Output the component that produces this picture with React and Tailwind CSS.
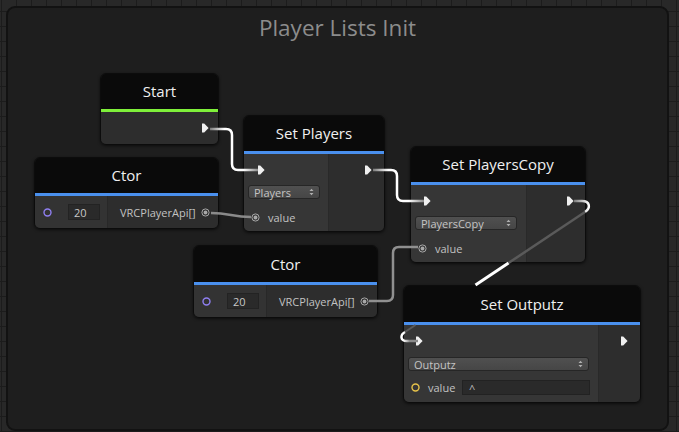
import React from 'react';

const font = "font-['Open_Sans',_'Liberation_Sans',_sans-serif]";

// flow port arrow (exec pin)
const Arrow = () => (
  <svg width="7" height="10" viewBox="0 0 7 10" className="block">
    <path d="M0 0.5 H2.2 L6.6 5 L2.2 9.5 H0 Z" fill="#f0f0f0" />
  </svg>
);

// connected data pin
const PinDot = () => (
  <svg width="9" height="9" viewBox="0 0 9 9" className="block shrink-0">
    <circle cx="4.5" cy="4.5" r="3.6" fill="none" stroke="#a8a8a8" strokeWidth="1" />
    <circle cx="4.5" cy="4.5" r="1.9" fill="#a8a8a8" />
  </svg>
);

const PinRing = ({ color }) => (
  <svg width="9" height="9" viewBox="0 0 9 9" className="block shrink-0">
    <circle cx="4.5" cy="4.5" r="3.5" fill="none" stroke={color} strokeWidth="1.4" />
  </svg>
);

const Dropdown = ({ label, className }) => (
  <div className={`flex items-center justify-between h-[14px] rounded-[3px] border border-[#262626] bg-[linear-gradient(#505050,#464646)] pl-[5px] pr-[5px] text-[11px] leading-none text-[#c4c4c4] ${className}`}>
    <span>{label}</span>
    <svg width="5" height="8" viewBox="0 0 5 8" className="block">
      <path d="M0.5 3 L2.5 0.8 L4.5 3 Z M0.5 5 L2.5 7.2 L4.5 5 Z" fill="#b0b0b0" />
    </svg>
  </div>
);

function Node({ pos, title, bar, head, children }) {
  return (
    <div className={`absolute ${pos} flex flex-col rounded-[6px] border border-[#0c0c0c] overflow-hidden shadow-[0_1px_3px_rgba(0,0,0,0.6)]`}>
      <div className={`${head} flex items-center justify-center bg-[#0a0a0a] text-[15px] text-[#f0f0f0]`}>{title}</div>
      <div className={`h-[3px] ${bar}`} />
      {children}
    </div>
  );
}

function CtorNode({ pos, head }) {
  return (
    <Node pos={pos} title="Ctor" bar="bg-[#4a90ee]" head={head}>
      <div className="flex h-[32px] text-[11px] text-[#c2c2c2]">
        <div className="w-[73px] flex items-center pl-[8px] bg-[#333333] border-r border-[#282828]">
          <PinRing color="#8f7ff0" />
          <div className="ml-[16px] w-[32px] h-[16px] bg-[#2a2a2a] border border-[#232323] flex items-center pl-[5px] leading-none text-[#c8c8c8]">20</div>
        </div>
        <div className="flex-1 flex items-center pl-[12px] pr-[8px] bg-[#2d2d2d]">
          <span className="leading-none">VRCPlayerApi[]</span>
          <div className="ml-auto"><PinDot /></div>
        </div>
      </div>
    </Node>
  );
}

function SetNode({ pos, title, leftW, arrowPl, dropdown, dropW, rightPr, head, dropMt, valueMt, valueExtra, ring }) {
  return (
    <Node pos={pos} title={title} bar="bg-[#4a90ee]" head={head}>
      <div className="flex h-[77px] text-[11px] text-[#c2c2c2]">
        <div className={`${leftW} flex flex-col pt-[6px] bg-[#363636] border-r border-[#292929]`}>
          <div className={`h-[20px] flex items-center ${arrowPl}`}><Arrow /></div>
          <div className={`${dropMt} pl-[4px]`}>
            <Dropdown label={dropdown} className={dropW} />
          </div>
          <div className={`${valueMt} h-[16px] flex items-center pl-[7px] pr-[8px]`}>
            {ring ? <PinRing color="#e6c24a" /> : <PinDot />}
            <span className="ml-[8px] leading-none">value</span>
            {valueExtra}
          </div>
        </div>
        <div className={`flex-1 flex flex-col pt-[6px] bg-[#2d2d2d] ${rightPr}`}>
          <div className="h-[20px] flex items-center justify-end"><Arrow /></div>
        </div>
      </div>
    </Node>
  );
}

export default function App() {
  return (
    <div className={`relative w-[679px] h-[432px] overflow-hidden bg-[#282828] bg-[linear-gradient(to_right,#1c1c1c_1px,transparent_1px),linear-gradient(to_bottom,#1c1c1c_1px,transparent_1px)] bg-size-[15px_15px] bg-position-[1px_11px] pl-[6px] pt-[6px] ${font}`}>
      {/* group frame */}
      <div className="w-[663px] h-[425px] rounded-[9px] border-2 border-[#121212] bg-[#1e1e1e] pt-[5px]">
        <div className="text-center text-[22.5px] leading-[30px] text-[#8c8c8c]">Player Lists Init</div>
      </div>

      <Node pos="left-[100px] top-[73px] w-[119px]" title="Start" bar="bg-[#7ff03a]" head="h-[35px]">
        <div className="h-[32px] flex items-center justify-end pr-[9px] bg-[#2d2d2d]">
          <Arrow />
        </div>
      </Node>

      <CtorNode pos="left-[34px] top-[157px] w-[185px]" head="h-[35px]" />

      <SetNode
        pos="left-[243px] top-[115px] w-[142px]"
        title="Set Players"
        head="h-[35px]"
        leftW="w-[85px]"
        arrowPl="pl-[14px]"
        dropdown="Players"
        dropW="w-[72px]"
        dropMt="mt-[5px]"
        valueMt="mt-[10px]"
        rightPr="pr-[12px]"
      />

      <SetNode
        pos="left-[410px] top-[146px] w-[176px]"
        title="Set PlayersCopy"
        head="h-[35px]"
        leftW="w-[116px]"
        arrowPl="pl-[13px]"
        dropdown="PlayersCopy"
        dropW="w-[102px]"
        dropMt="mt-[5px]"
        valueMt="mt-[10px]"
        rightPr="pr-[11px]"
      />

      <CtorNode pos="left-[193px] top-[245px] w-[185px]" head="h-[36px]" />

      <SetNode
        pos="left-[403px] top-[285px] w-[238px]"
        title="Set Outputz"
        head="h-[36px]"
        leftW="w-[195px]"
        arrowPl="pl-[12px]"
        dropdown="Outputz"
        dropW="w-[181px]"
        dropMt="mt-[6px]"
        valueMt="mt-[8px]"
        rightPr="pr-[12px]"
        ring
        valueExtra={
          <div className="ml-auto w-[128px] h-[15px] bg-[#2a2a2a] border border-[#222222] pl-[6px] text-[11px] leading-[15px] text-[#bdbdbd]">^</div>
        }
      />

      {/* wires */}
      <svg className="absolute left-0 top-0 pointer-events-none" width="679" height="432" viewBox="0 0 679 432" fill="none">
        <defs>
          <linearGradient id="w1" gradientUnits="userSpaceOnUse" x1="210" y1="0" x2="258" y2="0">
            <stop offset="0" stopColor="#7a7a7a" />
            <stop offset="0.3" stopColor="#ffffff" />
            <stop offset="0.7" stopColor="#ffffff" />
            <stop offset="1" stopColor="#8a8a8a" />
          </linearGradient>
          <linearGradient id="w2" gradientUnits="userSpaceOnUse" x1="373" y1="0" x2="424" y2="0">
            <stop offset="0" stopColor="#7a7a7a" />
            <stop offset="0.3" stopColor="#ffffff" />
            <stop offset="0.7" stopColor="#ffffff" />
            <stop offset="1" stopColor="#8a8a8a" />
          </linearGradient>
          <linearGradient id="w5a" gradientUnits="userSpaceOnUse" x1="574" y1="0" x2="589" y2="0">
            <stop offset="0" stopColor="#7a7a7a" />
            <stop offset="1" stopColor="#ffffff" />
          </linearGradient>
          <linearGradient id="w5b" gradientUnits="userSpaceOnUse" x1="401" y1="0" x2="418" y2="0">
            <stop offset="0.15" stopColor="#ffffff" />
            <stop offset="0.5" stopColor="#8a8a8a" />
            <stop offset="1" stopColor="#8a8a8a" />
          </linearGradient>
        </defs>
        <path d="M210 129 H226 Q232 129 232 135 V164 Q232 170 238 170 H258" stroke="url(#w1)" strokeWidth="2.5" />
        <path d="M373 170 H391 Q397 170 397 176 V195 Q397 201 403 201 H424" stroke="url(#w2)" strokeWidth="2.5" />
        <path d="M211 213 C230 213 232 217 251 217" stroke="#8a8a8a" strokeWidth="2.5" />
        <path d="M369 301 H387 Q393 301 393 295 V253 Q393 247 399 247 H418" stroke="#909090" strokeWidth="2.5" />
        <path d="M574 201 H582 C590 201 591 208 585 212" stroke="url(#w5a)" strokeWidth="2.5" />
        <path d="M585 212 L508.5 263" stroke="#5a5a5a" strokeWidth="2.5" />
        <path d="M508.5 263 L475.5 285" stroke="#ffffff" strokeWidth="3" />
        <path d="M415.5 325 L405 332" stroke="#5a5a5a" strokeWidth="2" />
        <path d="M405 332 C400 335 400 341 407 341 H418" stroke="url(#w5b)" strokeWidth="2.5" />
      </svg>
    </div>
  );
}
